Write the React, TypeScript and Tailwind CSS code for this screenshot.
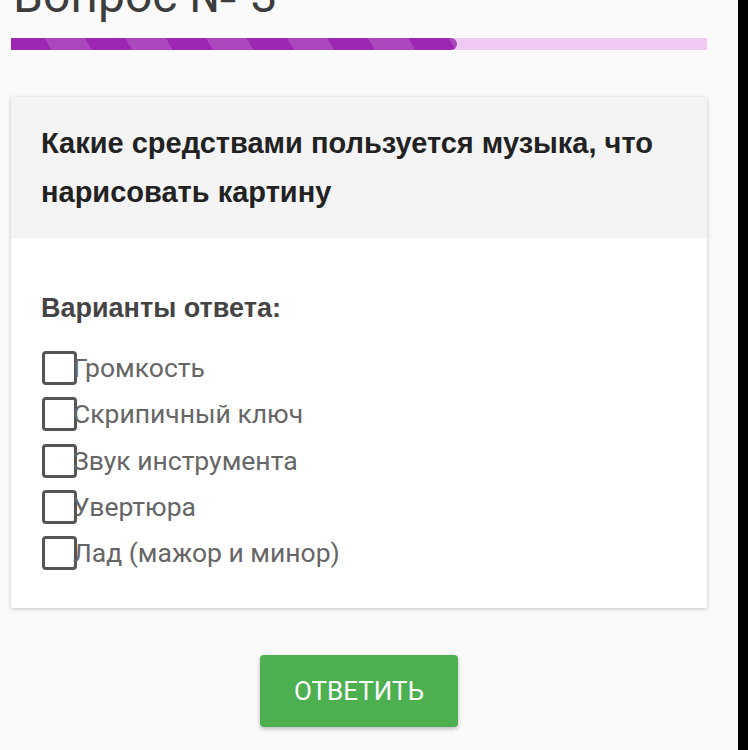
import React from "react";

const options = [
  "Громкость",
  "Скрипичный ключ",
  "Звук инструмента",
  "Увертюра",
  "Лад (мажор и минор)",
];

export default function App() {
  return (
    <div className="flex w-[748px] h-[750px] overflow-hidden bg-[#fafafa] [font-family:Roboto,'Noto_Sans',sans-serif]">
      <div className="w-[738px] flex flex-col">
        <div className="ml-[13px] mt-[-28px] h-[48px] text-[48px] leading-[48px] text-[#3d3d3d] whitespace-nowrap">
          Вопрос № 3
        </div>
        <div className="ml-[11px] mt-[18px] w-[696px] h-[12px] bg-[#f0c9f3]">
          <div className="h-full w-[446px] rounded-r-[6px] bg-[repeating-linear-gradient(60deg,#9c27b0_0px,#9c27b0_35px,#ab47bc_35px,#ab47bc_70px)]" />
        </div>
        <div className="ml-[11px] mt-[47px] w-[696px] bg-white rounded-[2px] shadow-[0_1px_4px_rgba(0,0,0,0.22)] overflow-hidden">
          <div className="bg-[#f4f4f4] pl-[30px] pr-[20px] pt-[22px] pb-[21px] text-[29px] leading-[49px] font-bold text-[#222] [font-family:'Liberation_Sans',Arial,sans-serif]">
            Какие средствами пользуется музыка, что нарисовать картину
          </div>
          <div className="pl-[31px] pt-[55px] pb-[32px]">
            <div className="ml-[-1px] text-[27px] leading-[30px] font-bold text-[#444] [font-family:'Liberation_Sans',Arial,sans-serif]">
              Варианты ответа:
            </div>
            <div className="mt-[22px] flex flex-col">
              {options.map((o) => (
                <div key={o} className="flex items-center h-[46.3px]">
                  <div className="w-[35px] h-[34px] border-[3px] border-[#555] rounded-[4px] shrink-0 bg-white" />
                  <span className="ml-[-4px] text-[26.5px] leading-[46px] text-[#666]">{o}</span>
                </div>
              ))}
            </div>
          </div>
        </div>
        <div className="mt-[47px] flex justify-center w-[718px]">
          <button className="w-[198px] h-[72px] rounded-[4px] bg-[#4caf50] text-white text-[26px] shadow-[0_2px_4px_rgba(0,0,0,0.25)]">
            ОТВЕТИТЬ
          </button>
        </div>
      </div>
      <div className="w-[10px] bg-black" />
    </div>
  );
}
